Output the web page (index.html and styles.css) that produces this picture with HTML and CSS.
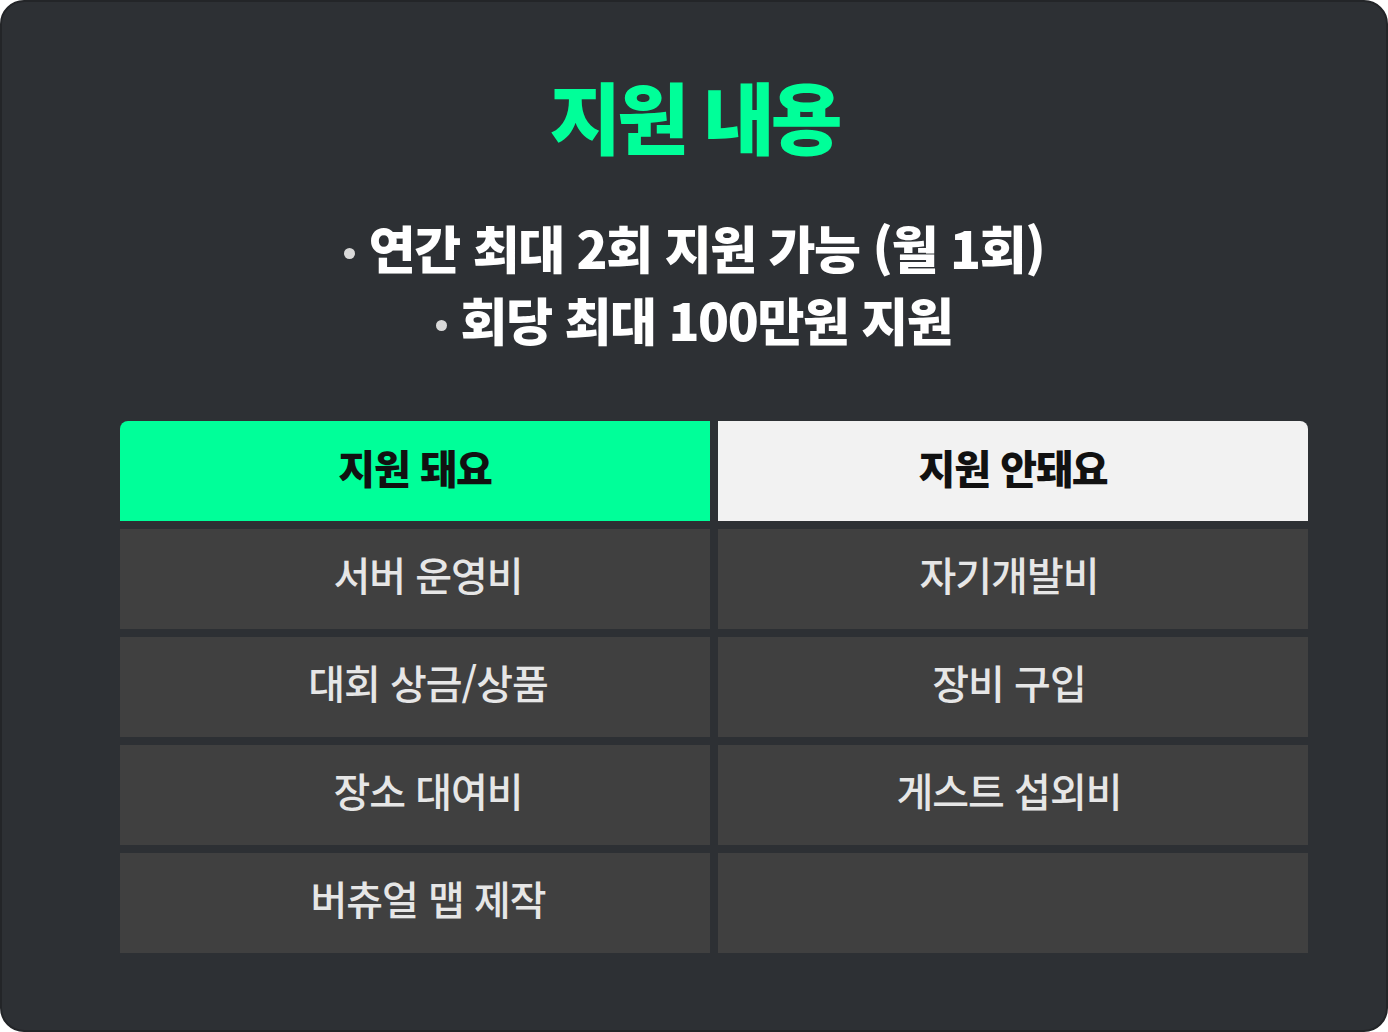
FILE: index.html
```html
<!DOCTYPE html>
<html lang="ko">
<head>
<meta charset="utf-8">
<title>지원 내용</title>
<link rel="stylesheet" href="styles.css">
</head>
<body>
<div class="card">
  <h1 class="title">지원 내용</h1>
  <ul class="points">
    <li>연간 최대 2회 지원 가능 (월 1회)</li>
    <li>회당 최대 100만원 지원</li>
  </ul>
  <div class="table">
    <div class="head head-yes">지원 돼요</div>
    <div class="head head-no">지원 안돼요</div>
    <div class="cell yes">서버 운영비</div>
    <div class="cell no">자기개발비</div>
    <div class="cell yes">대회 상금/상품</div>
    <div class="cell no">장비 구입</div>
    <div class="cell yes">장소 대여비</div>
    <div class="cell no">게스트 섭외비</div>
    <div class="cell yes">버츄얼 맵 제작</div>
    <div class="cell no"></div>
  </div>
</div>
</body>
</html>
```

FILE: styles.css
```css
* { box-sizing: border-box; }
html, body { margin: 0; padding: 0; background: #ffffff; }
body { font-family: "Noto Sans CJK KR", "Noto Sans", sans-serif; }

.card {
  width: 1388px;
  height: 1032px;
  background: #2d3034;
  border: 2px solid #232528;
  border-radius: 24px;
  padding: 67px 118px 0;
  display: flex;
  flex-direction: column;
  align-items: stretch;
}

.title {
  margin: 0;
  text-align: center;
  color: #00ff99;
  font-size: 78px;
  line-height: 92px;
  font-weight: 900;
  letter-spacing: -4px;
}

.points {
  list-style: none;
  margin: 50px 0 0;
  padding: 0;
  text-align: center;
  color: #ffffff;
  font-size: 51px;
  line-height: 72px;
  font-weight: 800;
  letter-spacing: -1.4px;
}
.points li::before {
  content: "";
  display: inline-block;
  width: 11px;
  height: 11px;
  border-radius: 50%;
  background: #d9d9d9;
  vertical-align: middle;
  margin-right: 14px;
  position: relative;
  top: -2px;
}

.table {
  margin-top: 66px;
  display: grid;
  grid-template-columns: 590px 590px;
  grid-auto-rows: 100px;
  gap: 8px;
}

.head {
  display: flex;
  align-items: center;
  justify-content: center;
  padding-bottom: 8px;
  font-size: 40px;
  font-weight: 800;
  letter-spacing: -1px;
  color: #111111;
}
.head-yes { background: #00ff99; border-radius: 8px 0 0 0; }
.head-no { background: #f2f2f2; border-radius: 0 8px 0 0; }

.cell {
  background: #404040;
  display: flex;
  align-items: center;
  justify-content: center;
  padding-bottom: 10px;
  color: #e6e6e6;
  font-size: 40px;
  font-weight: 500;
  letter-spacing: -1px;
}
.cell.yes { padding-left: 26px; }
.cell.no { padding-right: 8px; }
```
